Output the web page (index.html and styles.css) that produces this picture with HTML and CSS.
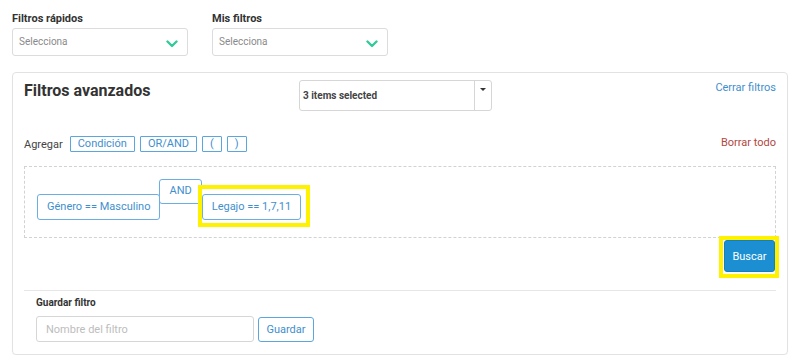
FILE: index.html
```html
<!DOCTYPE html>
<html lang="es">

<head>
    <meta charset="UTF-8">
    <meta name="viewport" content="width=device-width, initial-scale=1.0">
    <title>Filtros avanzados</title>
    <link rel="stylesheet" href="styles.css">
</head>

<body>
    <!-- Filtros rapidos -->
    <div class="top-filters">
        <div class="field">
            <label class="field-label">Filtros rápidos</label>
            <div class="select-box">
                <span>Selecciona</span>
                <svg class="chevron" width="12" height="8" viewBox="0 0 12 8">
                    <path d="M1.5 1.5 L6 6 L10.5 1.5" fill="none" stroke="#33c99a" stroke-width="2.4" stroke-linecap="round" stroke-linejoin="round" />
                </svg>
            </div>
        </div>
        <div class="field">
            <label class="field-label">Mis filtros</label>
            <div class="select-box">
                <span>Selecciona</span>
                <svg class="chevron" width="12" height="8" viewBox="0 0 12 8">
                    <path d="M1.5 1.5 L6 6 L10.5 1.5" fill="none" stroke="#33c99a" stroke-width="2.4" stroke-linecap="round" stroke-linejoin="round" />
                </svg>
            </div>
        </div>
    </div>

    <!-- Panel de filtros avanzados -->
    <div class="panel">
        <div class="panel-header">
            <h2 class="panel-title">Filtros avanzados</h2>
            <div class="multiselect">
                <span class="multiselect-text">3 items selected</span>
                <span class="multiselect-caret"></span>
            </div>
            <a class="link-blue" href="#">Cerrar filtros</a>
        </div>

        <div class="add-row">
            <span class="add-label">Agregar</span>
            <button class="btn-outline">Condición</button>
            <button class="btn-outline">OR/AND</button>
            <button class="btn-outline">(</button>
            <button class="btn-outline">)</button>
            <a class="link-red" href="#">Borrar todo</a>
        </div>

        <div class="query-box">
            <div class="chip chip-low">Género == Masculino</div>
            <div class="chip chip-op">AND</div>
            <div class="highlight highlight-chip">
                <div class="chip">Legajo == 1,7,11</div>
            </div>
        </div>

        <div class="search-row">
            <div class="highlight highlight-btn">
                <button class="btn-primary">Buscar</button>
            </div>
        </div>

        <div class="save-section">
            <div class="save-label">Guardar filtro</div>
            <div class="save-row">
                <input type="text" class="save-input" placeholder="Nombre del filtro">
                <button class="btn-save">Guardar</button>
            </div>
        </div>
    </div>
</body>

</html>
```

FILE: styles.css
```css
body {
    font-family: Roboto, "Liberation Sans", Arial, sans-serif;
    margin: 0;
    padding: 12px 8px 0 12px;
    background-color: #ffffff;
    color: #333;
}

/* Filtros de arriba */
.top-filters {
    display: flex;
    gap: 24px;
}

.field {
    width: 176px;
}

.field-label {
    display: block;
    font-size: 11px;
    font-weight: bold;
    line-height: 14px;
    margin-bottom: 2px;
    color: #333;
}

.select-box {
    height: 28px;
    box-sizing: border-box;
    border: 1px solid #dcdcdc;
    border-radius: 3px;
    display: flex;
    align-items: center;
    justify-content: space-between;
    padding: 0 9px 0 6px;
    font-size: 10px;
    color: #8a8a8a;
}

.select-box span {
    margin-top: -2px;
}

.chevron {
    margin-top: 3px;
}

/* Panel */
.panel {
    margin-top: 16px;
    border: 1px solid #e2e2e2;
    border-radius: 4px;
    padding: 7px 11px 12px 11px;
    box-shadow: 0 1px 1px rgba(0, 0, 0, 0.04);
}

.panel-header {
    display: flex;
    align-items: flex-start;
}

.panel-title {
    margin: 0;
    width: 275px;
    font-size: 16px;
    line-height: 22px;
    font-weight: bold;
    color: #333;
}

.multiselect {
    width: 193px;
    height: 31px;
    box-sizing: border-box;
    border: 1px solid #d6d6d6;
    border-radius: 3px;
    display: flex;
    align-items: center;
}

.multiselect-text {
    flex: 1;
    padding-left: 3px;
    font-size: 10px;
    font-weight: bold;
    color: #444;
}

.multiselect-caret {
    width: 16px;
    height: 100%;
    border-left: 1px solid #d6d6d6;
    position: relative;
}

.multiselect-caret::after {
    content: "";
    position: absolute;
    left: 5px;
    top: 7px;
    border-left: 3.5px solid transparent;
    border-right: 3.5px solid transparent;
    border-top: 3.5px solid #333;
}

.link-blue {
    margin-left: auto;
    margin-top: 1px;
    font-size: 11px;
    color: #3f8fce;
    text-decoration: none;
}

.link-red {
    margin-left: auto;
    margin-top: -4px;
    font-size: 11px;
    color: #b0483f;
    text-decoration: none;
}

/* Agregar */
.add-row {
    display: flex;
    align-items: center;
    margin-top: 25px;
    gap: 5px;
}

.add-label {
    font-size: 11px;
    color: #444;
    margin-right: 2px;
}

.btn-outline {
    font-family: inherit;
    font-size: 11px;
    line-height: 14px;
    height: 16px;
    padding: 0 7px;
    background-color: #fff;
    border: 1px solid #5aa6dd;
    border-radius: 1px;
    color: #3f8fce;
}

/* Caja de condiciones */
.query-box {
    margin-top: 14px;
    height: 72px;
    box-sizing: border-box;
    border: 1px dashed #d2d2d2;
    padding: 12px 12px 0 12px;
    display: flex;
    align-items: flex-start;
}

.chip {
    font-size: 11px;
    line-height: 14px;
    padding: 5px 9px;
    border: 1px solid #6aaee2;
    border-radius: 3px;
    color: #3f8fce;
    background-color: #fff;
    white-space: nowrap;
}

.chip-low {
    margin-top: 15px;
    position: relative;
    z-index: 1;
}

.chip-op {
    margin-left: -1px;
    padding: 4px 9px 6px 9px;
    line-height: 13px;
}

.highlight {
    border: 4px solid #fff200;
    position: relative;
    z-index: 2;
}

.highlight-chip {
    margin-top: 6px;
    margin-left: -4px;
    padding: 5px 5px 3px 0;
}

/* Buscar */
.search-row {
    display: flex;
    justify-content: flex-end;
    margin-top: -2px;
    margin-right: -3px;
}

.highlight-btn {
    padding: 0 0 2px 1px;
}

.btn-primary {
    display: block;
    width: 51px;
    height: 32px;
    font-family: inherit;
    font-size: 11px;
    color: #fff;
    background-color: #1b8fd2;
    border: 1px solid #167fbe;
    border-radius: 3px;
}

/* Guardar filtro */
.save-section {
    margin-top: 12px;
    border-top: 1px solid #e6e6e6;
    padding: 5px 12px 0 12px;
}

.save-label {
    font-size: 10px;
    font-weight: bold;
    line-height: 14px;
    color: #333;
}

.save-row {
    display: flex;
    align-items: flex-start;
    gap: 4px;
    margin-top: 6px;
}

.save-input {
    width: 218px;
    height: 26px;
    box-sizing: border-box;
    border: 1px solid #d6d6d6;
    border-radius: 3px;
    padding: 0 9px;
    font-family: inherit;
    font-size: 11px;
}

.save-input::placeholder {
    color: #bdbdbd;
}

.btn-save {
    margin-top: 1px;
    width: 56px;
    height: 25px;
    font-family: inherit;
    font-size: 11px;
    color: #3f8fce;
    background-color: #fff;
    border: 1px solid #5aa6dd;
    border-radius: 3px;
}
```
